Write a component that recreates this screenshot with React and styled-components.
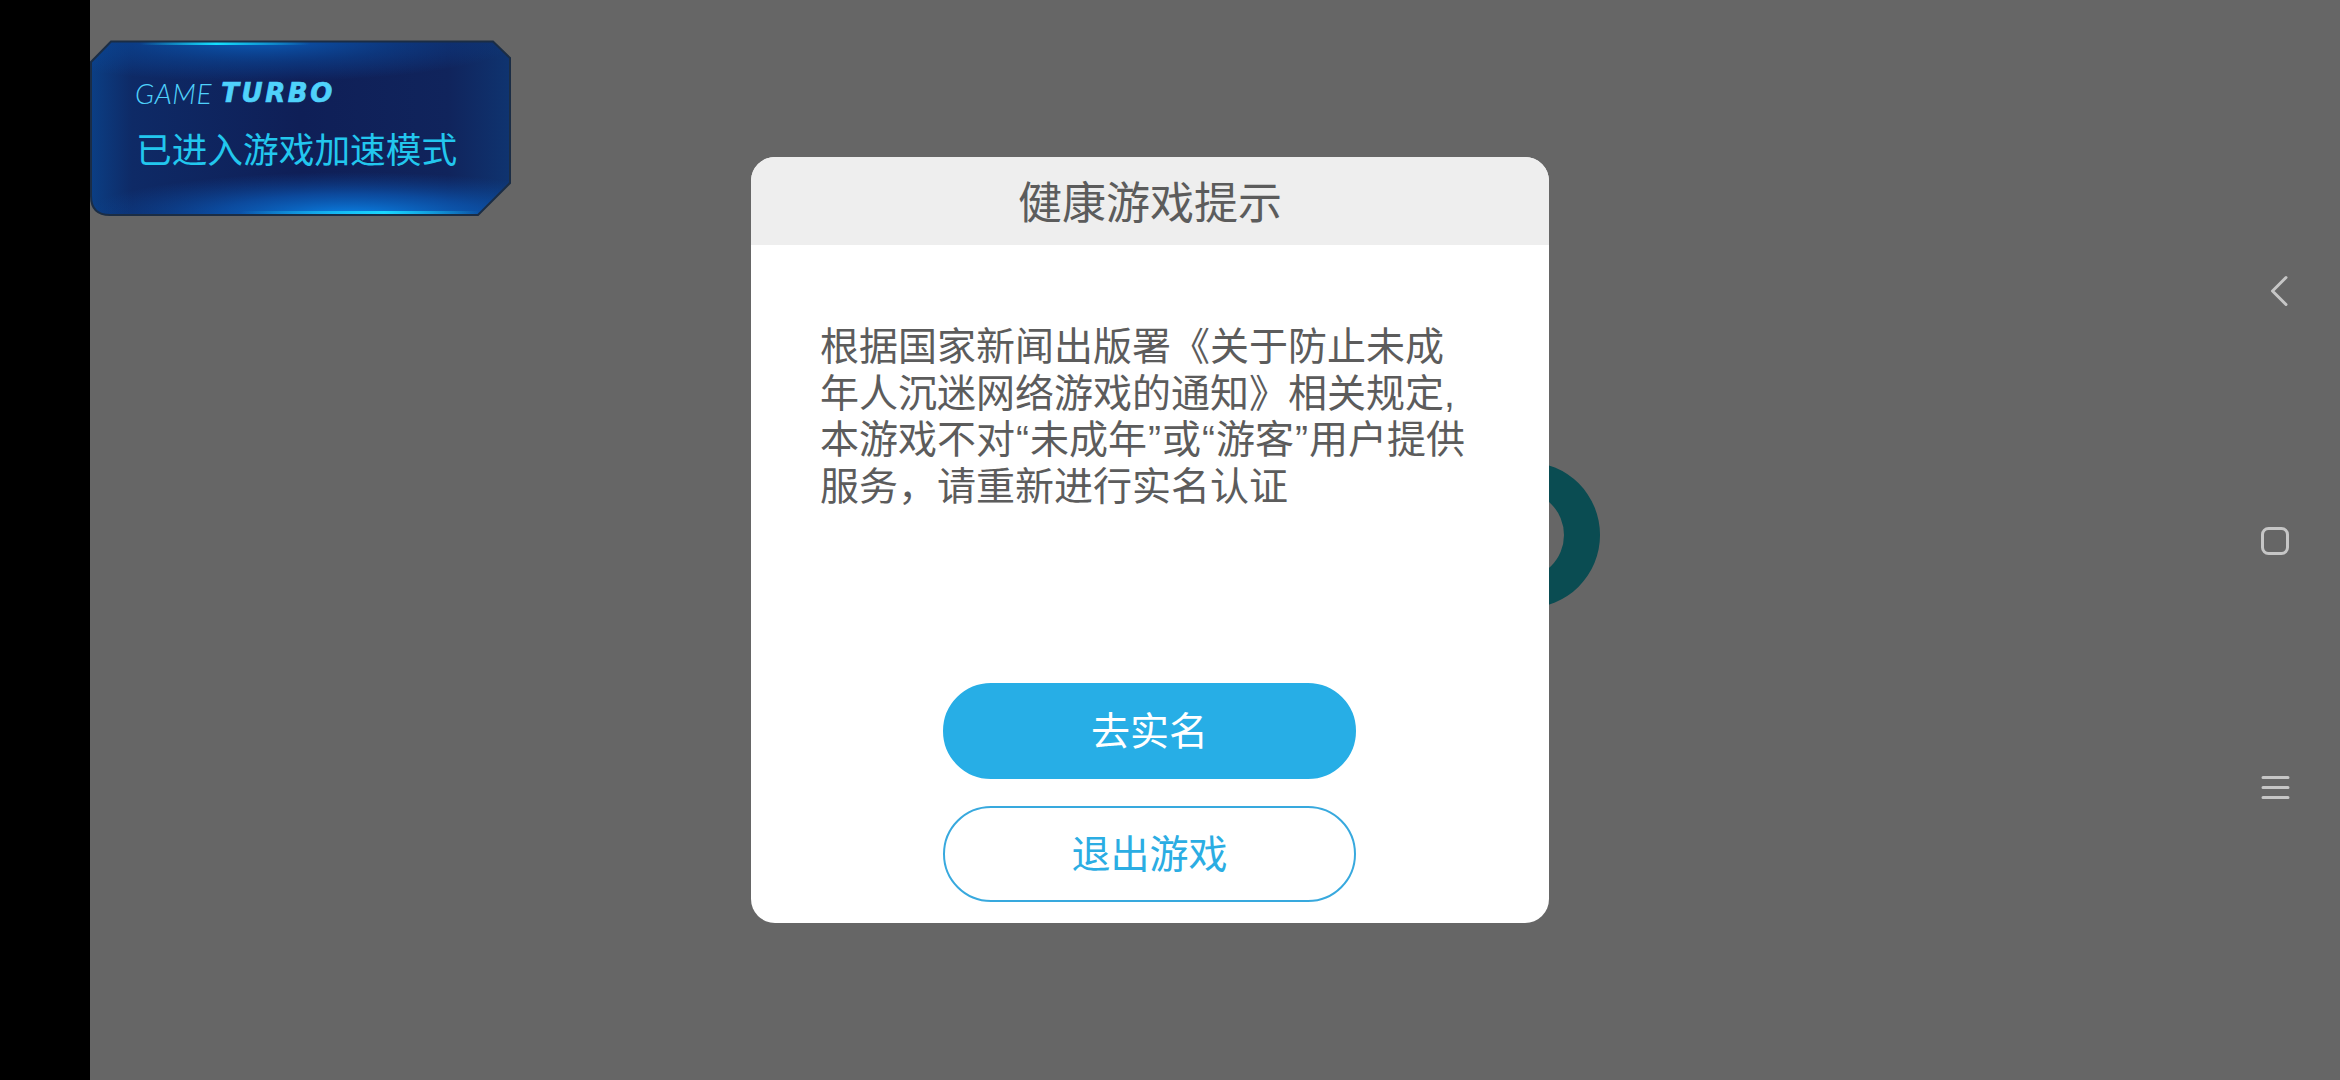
import React from 'react';
import styled, { createGlobalStyle } from 'styled-components';

const GlobalStyle = createGlobalStyle`
  html, body {
    margin: 0;
    padding: 0;
    background: #000;
  }
  #root {
    width: 2340px;
    height: 1080px;
    overflow: hidden;
  }
  * {
    box-sizing: border-box;
  }
`;

const Screen = styled.div`
  display: flex;
  width: 2340px;
  height: 1080px;
  background: #666;
  font-family: 'Liberation Sans', 'Noto Sans CJK SC', sans-serif;
`;

const Cutout = styled.div`
  flex: 0 0 90px;
  background: #000;
`;

const Stage = styled.main`
  position: relative;
  flex: 1;
  display: flex;
  align-items: center;
  justify-content: center;
`;

const GameLogo = styled.svg`
  position: absolute;
  left: 1360px;
  top: 455px;
`;

const Banner = styled.div`
  position: absolute;
  left: 0;
  top: 40px;
  width: 421px;
  height: 176px;
  padding: 43px 0 0 45px;
`;

const BannerArt = styled.svg`
  position: absolute;
  left: 0;
  top: 0;
`;

const BannerBrand = styled.div`
  position: relative;
  display: flex;
  gap: 9px;
  height: 20px;
  line-height: 20px;
  font-style: italic;
  white-space: nowrap;
  color: #4fd2fb;
`;

const BrandLight = styled.span`
  font-family: 'Lato', 'Liberation Sans', sans-serif;
  font-size: 28px;
  font-weight: 300;
  letter-spacing: 0.6px;
`;

const BrandBold = styled.span`
  font-family: 'DejaVu Sans', sans-serif;
  font-size: 26px;
  font-weight: 700;
  letter-spacing: 2.6px;
  -webkit-text-stroke: 0.7px #4fd2fb;
`;

const BannerText = styled.div`
  position: relative;
  margin: 23px 0 0 1px;
  font-family: 'Noto Sans CJK SC', sans-serif;
  font-size: 35.7px;
  line-height: 44px;
  white-space: nowrap;
  color: #22c7ee;
`;

const Dialog = styled.section`
  position: relative;
  display: flex;
  flex-direction: column;
  width: 798px;
  height: 766px;
  border-radius: 24px;
  overflow: hidden;
  background: #fff;
`;

const DialogTitle = styled.header`
  flex: 0 0 88px;
  display: flex;
  align-items: center;
  justify-content: center;
  padding-bottom: 2px;
  background: #eee;
  font-family: 'Noto Sans CJK SC', sans-serif;
  font-size: 44px;
  color: #5c5c5c;
`;

const DialogBody = styled.div`
  flex: 1;
  padding: 79px 0 0 69px;
  font-size: 39px;
  line-height: 46.5px;
  color: #5c5c5c;
`;

const BodyLine = styled.div`
  white-space: nowrap;
`;

const Quoted = styled.span`
  padding: 0 1px;
`;

const Actions = styled.div`
  display: flex;
  flex-direction: column;
  align-items: center;
  gap: 27px;
  padding: 0 1px 21px 0;
`;

const ActionButton = styled.button`
  width: 413px;
  height: 96px;
  padding: 0 0 6px;
  border: 2px solid ${(props) => (props.$primary ? '#27aee6' : '#38a9de')};
  border-radius: 48px;
  background: ${(props) => (props.$primary ? '#27aee6' : '#fff')};
  color: ${(props) => (props.$primary ? '#fff' : '#2bade3')};
  font-family: 'Noto Sans CJK SC', sans-serif;
  font-size: 39px;
`;

const NavBar = styled.nav`
  flex: 0 0 130px;
  display: flex;
  flex-direction: column;
  align-items: center;
  justify-content: center;
  gap: 208.5px;
  margin-top: -1px;
`;

const NavIcon = styled.svg`
  display: block;
  fill: none;
  stroke: #c6c6c6;
  stroke-width: 3;
  stroke-linecap: round;
  stroke-linejoin: round;
`;

const bannerOutline =
  'M21 1.5 H403 L420 18 V143 L388 175 H20 Q1 175 1 156 V22 Z';

const BannerBackdrop = () => (
  <BannerArt width="421" height="176" viewBox="0 0 421 176">
    <defs>
      <linearGradient id="bannerBase" x1="0" y1="0" x2="1" y2="0">
        <stop offset="0" stopColor="#0b3f85" />
        <stop offset="0.1" stopColor="#0e2a66" />
        <stop offset="0.5" stopColor="#0f1f57" />
        <stop offset="0.85" stopColor="#10245c" />
        <stop offset="1" stopColor="#0f3470" />
      </linearGradient>
      <radialGradient id="topGlow">
        <stop offset="0" stopColor="#0a62c4" stopOpacity="0.9" />
        <stop offset="0.55" stopColor="#0a4a9e" stopOpacity="0.5" />
        <stop offset="1" stopColor="#0a4aa0" stopOpacity="0" />
      </radialGradient>
      <radialGradient id="bottomGlow">
        <stop offset="0" stopColor="#0a86ea" stopOpacity="1" />
        <stop offset="0.5" stopColor="#0a5fc0" stopOpacity="0.65" />
        <stop offset="1" stopColor="#0a4aa0" stopOpacity="0" />
      </radialGradient>
      <linearGradient id="topLine" x1="0" y1="0" x2="1" y2="0">
        <stop offset="0" stopColor="#15e0ff" stopOpacity="0" />
        <stop offset="0.45" stopColor="#15e0ff" />
        <stop offset="1" stopColor="#15e0ff" stopOpacity="0" />
      </linearGradient>
      <linearGradient id="bottomLine" x1="0" y1="0" x2="1" y2="0">
        <stop offset="0" stopColor="#1ad8ff" stopOpacity="0" />
        <stop offset="0.6" stopColor="#1ad8ff" />
        <stop offset="1" stopColor="#1ad8ff" stopOpacity="0" />
      </linearGradient>
      <clipPath id="bannerClip">
        <path d={bannerOutline} />
      </clipPath>
    </defs>
    <g clipPath="url(#bannerClip)">
      <rect width="421" height="176" fill="url(#bannerBase)" />
      <ellipse cx="170" cy="0" rx="260" ry="42" fill="url(#topGlow)" />
      <ellipse cx="260" cy="176" rx="270" ry="44" fill="url(#bottomGlow)" />
      <rect x="50" y="1" width="170" height="4" fill="url(#topLine)" />
      <rect x="150" y="171" width="240" height="4" fill="url(#bottomLine)" />
    </g>
    <path d={bannerOutline} fill="none" stroke="#1b2d45" strokeWidth="2" />
  </BannerArt>
);

const App = () => {
  return (
    <Screen>
      <GlobalStyle />
      <Cutout />
      <Stage>
        <GameLogo width="170" height="160" viewBox="0 0 170 160">
          <path
            fillRule="evenodd"
            fill="#0a4c52"
            d="M77 7 A73 73 0 1 1 77 153 A73 73 0 1 1 77 7 Z M70 36 A44 44 0 1 0 70 124 A44 44 0 1 0 70 36 Z"
          />
        </GameLogo>
        <Banner>
          <BannerBackdrop />
          <BannerBrand>
            <BrandLight>GAME</BrandLight>
            <BrandBold>TURBO</BrandBold>
          </BannerBrand>
          <BannerText>已进入游戏加速模式</BannerText>
        </Banner>
        <Dialog>
          <DialogTitle>健康游戏提示</DialogTitle>
          <DialogBody>
            <BodyLine>根据国家新闻出版署《关于防止未成</BodyLine>
            <BodyLine>年人沉迷网络游戏的通知》相关规定,</BodyLine>
            <BodyLine>
              本游戏不对<Quoted>“</Quoted>未成年<Quoted>”</Quoted>或<Quoted>“</Quoted>游客<Quoted>”</Quoted>用户提供
            </BodyLine>
            <BodyLine>服务，请重新进行实名认证</BodyLine>
          </DialogBody>
          <Actions>
            <ActionButton $primary>去实名</ActionButton>
            <ActionButton>退出游戏</ActionButton>
          </Actions>
        </Dialog>
      </Stage>
      <NavBar>
        <NavIcon width="40" height="40" viewBox="0 0 40 40">
          <polyline points="31,6.5 17.5,20 31,33.5" />
        </NavIcon>
        <NavIcon width="40" height="40" viewBox="0 0 40 40">
          <rect x="7.5" y="8.5" width="25" height="25" rx="6" />
        </NavIcon>
        <NavIcon width="40" height="40" viewBox="0 0 40 40">
          <path d="M8 9.5 H33 M8 19.5 H33 M8 29.5 H33" />
        </NavIcon>
      </NavBar>
    </Screen>
  );
};

export default App;
